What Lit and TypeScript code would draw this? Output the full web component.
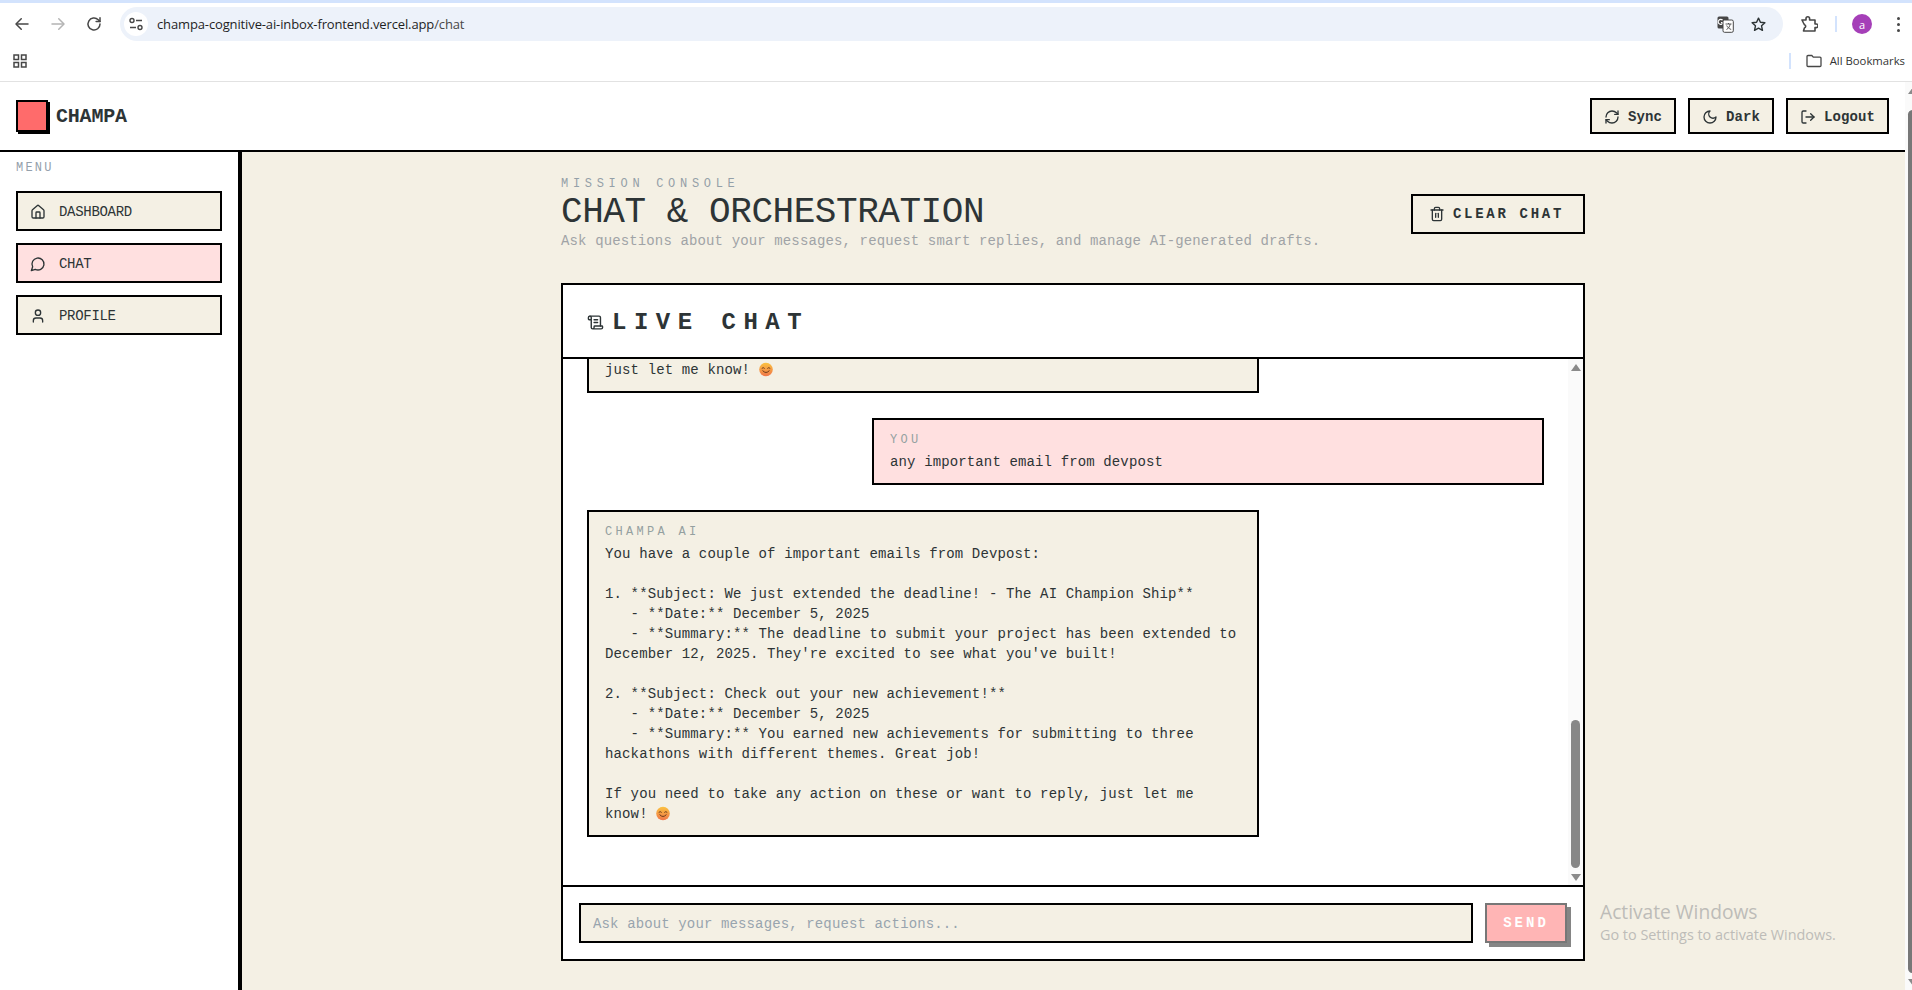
import { LitElement, html, css, svg } from "lit";
import { customElement } from "lit/decorators.js";

const ic = (body: unknown, size = 16, sw = 2) => html`<svg class="ic" width=${size} height=${size} viewBox="0 0 24 24" fill="none" stroke="currentColor" stroke-width=${sw} stroke-linecap="round" stroke-linejoin="round">${body}</svg>`;

const house = svg`<path d="M15 21v-8a1 1 0 0 0-1-1h-4a1 1 0 0 0-1 1v8"/><path d="M3 10a2 2 0 0 1 .709-1.528l7-5.999a2 2 0 0 1 2.582 0l7 5.999A2 2 0 0 1 21 10v9a2 2 0 0 1-2 2H5a2 2 0 0 1-2-2z"/>`;
const msg = svg`<path d="M7.9 20A9 9 0 1 0 4 16.1L2 22Z"/>`;
const user = svg`<path d="M19 21v-2a4 4 0 0 0-4-4H9a4 4 0 0 0-4 4v2"/><circle cx="12" cy="7" r="4"/>`;
const refresh = svg`<path d="M3 12a9 9 0 0 1 9-9 9.75 9.75 0 0 1 6.74 2.74L21 8"/><path d="M21 3v5h-5"/><path d="M21 12a9 9 0 0 1-9 9 9.75 9.75 0 0 1-6.74-2.74L3 16"/><path d="M8 16H3v5"/>`;
const moon = svg`<path d="M12 3a6 6 0 0 0 9 9 9 9 0 1 1-9-9Z"/>`;
const logout = svg`<path d="M9 21H5a2 2 0 0 1-2-2V5a2 2 0 0 1 2-2h4"/><path d="m16 17 5-5-5-5"/><path d="M21 12H9"/>`;
const trash = svg`<path d="M3 6h18"/><path d="M19 6v14c0 1-1 2-2 2H7c-1 0-2-1-2-2V6"/><path d="M8 6V4c0-1 1-2 2-2h4c1 0 2 1 2 2v2"/><line x1="10" y1="11" x2="10" y2="17"/><line x1="14" y1="11" x2="14" y2="17"/>`;
const scroll = svg`<path d="M15 12h-5"/><path d="M15 8h-5"/><path d="M19 17V5a2 2 0 0 0-2-2H4"/><path d="M8 21h12a2 2 0 0 0 2-2v-1a1 1 0 0 0-1-1H11a1 1 0 0 0-1 1v1a2 2 0 1 1-4 0V5a2 2 0 1 0-4 0v2a1 1 0 0 0 1 1h3"/>`;

const smile = html`<svg class="emoji" width="14" height="15" viewBox="0 0 14 15">
  <defs><linearGradient id="eg" x1="0" y1="0" x2="0" y2="1"><stop offset="0" stop-color="#fbc23f"/><stop offset="1" stop-color="#f0764a"/></linearGradient></defs>
  <circle cx="7" cy="7.5" r="6.8" fill="url(#eg)"/>
  <path d="M3 6.2q1.2-1.4 2.4 0M8.6 6.2q1.2-1.4 2.4 0" stroke="#6b3a1c" stroke-width="1" fill="none" stroke-linecap="round"/>
  <path d="M3.8 8.8q3.2 3.6 6.4 0" stroke="#6b3a1c" stroke-width="1" fill="none" stroke-linecap="round"/>
</svg>`;

@customElement("app-root")
export class AppRoot extends LitElement {
  static styles = css`
    :host { display: block; width: 1912px; height: 990px; overflow: hidden; position: relative; background: #fff; font-family: "Liberation Mono", monospace; color: #2d3436; }
    * { box-sizing: border-box; }
    .ic { display: block; flex: none; }

    /* browser chrome */
    .chrome { height: 82px; background: #fff; border-bottom: 1px solid #e2e2e2; border-top: 3px solid #d3e3fd; font-family: "Open Sans", "Liberation Sans", sans-serif; }
    .toolbar { height: 38px; display: flex; align-items: center; padding: 4px 8px 0 4px; }
    .tb { width: 36px; height: 34px; display: flex; align-items: center; justify-content: center; color: #474747; flex: none; }
    .tb.dim { color: #b4b4b4; }
    .omni { flex: 1; height: 34px; border-radius: 17px; background: #edf2fa; margin-left: 8px; display: flex; align-items: center; padding: 0 16px 0 4px; gap: 16px; }
    .tune { width: 24px; height: 24px; border-radius: 50%; background: #fff; display: flex; align-items: center; justify-content: center; color: #474747; flex: none; }
    .url { margin-left: -7px; flex: 1; font-size: 13px; color: #1f1f1f; letter-spacing: -0.01em; white-space: nowrap; }
    .url span { color: #474747; }
    .ext { margin-left: 8px; }
    .sep { width: 2px; height: 16px; background: #d3e3fd; flex: none; }
    .sep.s1 { margin-left: 8px; }
    .avatar { width: 20px; height: 20px; border-radius: 50%; background: #a53fb8; color: #fff; font-size: 11px; display: flex; align-items: center; justify-content: center; margin-left: 15px; flex: none; }
    .dots { width: 12px; margin-left: 20px; display: flex; flex-direction: column; align-items: center; gap: 3px; flex: none; }
    .dots i { width: 3px; height: 3px; border-radius: 50%; background: #474747; display: block; }
    .bookmarks { height: 40px; display: flex; align-items: center; padding: 0 7px 1px 13px; color: #474747; }
    .spacer { flex: 1; }
    .bm-text { font-size: 11.3px; color: #333; margin-left: 8px; white-space: nowrap; }
    .bm-folder { margin-left: 15px; }

    /* page */
    .page { display: flex; height: 908px; }
    .app { flex: 1; min-width: 0; display: flex; flex-direction: column; }
    .page-sb { width: 7px; overflow: hidden; flex: none; }
    .sb { width: 15px; height: 100%; background: #fafafa; display: flex; flex-direction: column; align-items: center; padding: 5px 0 4px; flex: none; }
    .up { width: 0; height: 0; border-left: 5px solid transparent; border-right: 5px solid transparent; border-bottom: 7px solid #8a8a8a; flex: none; }
    .down { width: 0; height: 0; border-left: 5px solid transparent; border-right: 5px solid transparent; border-top: 7px solid #8a8a8a; flex: none; }
    .thumb { width: 9px; border-radius: 5px; background: #878787; margin-bottom: 6px; flex: none; }
    .thumb.inner { height: 148px; }
    .thumb.outer { height: 863px; background: #777; }

    .hdr { height: 70px; flex: none; border-bottom: 2px solid #000; background: #fff; display: flex; align-items: center; padding: 0 16px; }
    .logo { width: 32px; height: 32px; background: #ff6b6b; border: 2px solid #000; box-shadow: 2px 2px 0 #000; flex: none; }
    .brand { margin-left: 8px; font-size: 20px; font-weight: 700; letter-spacing: -0.2px; }
    .hbtn { height: 36px; border: 2px solid #000; background: #f4f0e4; display: flex; align-items: center; gap: 8px; padding: 2px 12px 0; font: 700 14px "Liberation Mono", monospace; letter-spacing: 0.1px; color: #2d3436; margin-left: 12px; }
    .body { flex: 1; display: flex; min-height: 0; }
    .side { width: 242px; flex: none; border-right: 4px solid #000; background: #fff; padding: 9px 16px 0; }
    .menu { font-size: 12px; line-height: 15px; letter-spacing: 2.2px; color: #94a0ab; margin-bottom: 15px; }
    .nav { display: flex; flex-direction: column; gap: 12px; }
    .nav a { height: 40px; border: 2px solid #000; background: #f4f0e4; display: flex; align-items: center; gap: 13px; padding: 2px 12px 0; font-size: 14px; letter-spacing: -0.3px; }
    .nav a.on { background: #ffe0e0; }

    .main { flex: 1; min-width: 0; background: #f4f0e4; overflow: hidden; padding: 24px 1px 0 0; }
    .wrap { width: 1024px; margin: 0 auto; }
    .head { display: flex; justify-content: space-between; align-items: center; margin-bottom: 32px; }
    .eyebrow { font-size: 12px; line-height: 16px; letter-spacing: 4.7px; color: #94a0a8; }
    h1 { margin: 0; font-size: 36px; line-height: 42px; font-weight: 400; letter-spacing: -0.45px; }
    .sub { font-size: 14px; line-height: 20px; letter-spacing: 0.13px; color: #a0a3a6; margin-top: -3px; }
    .clear { height: 40px; border: 2px solid #000; background: #f4f0e4; display: flex; align-items: center; gap: 8px; padding: 0 19px 0 16px; font: 700 14px "Liberation Mono", monospace; letter-spacing: 2.7px; color: #2d3436; }

    .card { height: 678px; border: 2px solid #000; background: #fff; display: flex; flex-direction: column; }
    .card-h { height: 74px; flex: none; border-bottom: 2px solid #000; display: flex; align-items: center; padding: 2px 0 0 24px; gap: 8px; }
    .card-h h2 { margin: 0; font-size: 24px; font-weight: 700; letter-spacing: 7.5px; }
    .mid { flex: 1; min-height: 0; display: flex; }
    .msgs { flex: 1; min-width: 0; overflow: hidden; display: flex; flex-direction: column; justify-content: flex-end; gap: 25px; padding: 0 24px 48px; }
    .bubble { width: 672px; flex: none; border: 2px solid #000; padding: 12px 16px 11px; font-size: 14px; line-height: 20px; letter-spacing: 0.13px; }
    .bubble.ai { background: #f4f0e4; }
    .bubble.me { background: #ffe0e0; align-self: flex-end; }
    .who { font-size: 12px; line-height: 16px; letter-spacing: 3.3px; color: #94a0a0; margin-bottom: 4px; }
    .txt { white-space: pre-wrap; }
    .emoji { vertical-align: -3px; }
    .composer { flex: none; height: 74px; border-top: 2px solid #000; padding: 16px; display: flex; gap: 12px; }
    .composer input { flex: 1; min-width: 0; height: 40px; border: 2px solid #000; background: #f4f0e4; padding: 2px 10px 0 12px; font: 14px "Liberation Mono", monospace; letter-spacing: 0.13px; outline: none; border-radius: 0; }
    .composer input::placeholder { color: #98a4ae; opacity: 1; }
    .send { width: 82px; height: 40px; border: 2px solid #777; background: #ffb5b5; color: #fff; font: 700 14px "Liberation Mono", monospace; letter-spacing: 3px; box-shadow: 4px 4px 0 #858585; padding: 0; }
    .watermark { position: absolute; left: 1600px; top: 899px; color: #bdbcb8; font-family: "Open Sans", "Liberation Sans", sans-serif; pointer-events: none; }
    .watermark b { display: block; font-weight: 400; font-size: 19.2px; line-height: 26px; }
    .watermark span { display: block; font-size: 14.4px; line-height: 19px; }
  `;

  render() {
    const aiText = `You have a couple of important emails from Devpost:

1. **Subject: We just extended the deadline! - The AI Champion Ship**
   - **Date:** December 5, 2025
   - **Summary:** The deadline to submit your project has been extended to December 12, 2025. They're excited to see what you've built!

2. **Subject: Check out your new achievement!**
   - **Date:** December 5, 2025
   - **Summary:** You earned new achievements for submitting to three hackathons with different themes. Great job!

If you need to take any action on these or want to reply, just let me know! `;
    return html`
      <div class="chrome">
        <div class="toolbar">
          <div class="tb">${ic(svg`<path d="M20 12H5"/><path d="m11 5-7 7 7 7"/>`, 18, 2)}</div>
          <div class="tb dim">${ic(svg`<path d="M4 12h15"/><path d="m13 5 7 7-7 7"/>`, 18, 2)}</div>
          <div class="tb">${ic(svg`<path d="M20 12a8 8 0 1 1-2.4-5.7L20 8.6"/><path d="M20 3.5v5.2h-5.2"/>`, 18, 2)}</div>
          <div class="omni">
            <div class="tune">
              <svg width="16" height="16" viewBox="0 0 16 16" fill="none" stroke="currentColor" stroke-width="1.4"><circle cx="4" cy="4.5" r="2"/><path d="M8 4.5h6M2 11.5h6"/><circle cx="12" cy="11.5" r="2"/></svg>
            </div>
            <div class="url">champa-cognitive-ai-inbox-frontend.vercel.app<span>/chat</span></div>
            <svg class="ic" width="17" height="17" viewBox="0 0 17 17">
              <rect x="0.5" y="0.5" width="11" height="12" rx="1.5" fill="#474747"/>
              <path d="M5.6 4.2a2.5 2.5 0 1 0 .5 2.4H4" fill="none" stroke="#fff" stroke-width="1.1"/>
              <rect x="6" y="4" width="10.3" height="12.3" rx="1.5" fill="#fff" stroke="#474747"/>
              <path d="M8.5 8h6M11.5 7v1M9.5 13.5c2-1 3.3-3 3.6-5.5M9.7 9.5c.8 1.800 2.500 3.300 4.500 4" stroke="#474747" fill="none" stroke-width=".9"/>
            </svg>
            ${ic(svg`<path d="m12 3 2.700 5.900 6.300.7-4.700 4.300 1.300 6.400L12 17.100l-5.600 3.200 1.300-6.400L3 9.600l6.300-.7z"/>`, 17, 2)}
          </div>
          <div class="tb ext">
            <svg width="18" height="18" viewBox="0 0 18 18" fill="none" stroke="currentColor" stroke-width="1.6" stroke-linejoin="round"><path d="M2 5h4V3.500a1.800 1.800 0 0 1 3.600 0V5h5.400v4h1.200a1.800 1.800 0 0 1 0 3.600H15V16H3.500l.9-3a1.700 1.700 0 0 0 0-3.300L3.500 8z"/></svg>
          </div>
          <div class="sep s1"></div>
          <div class="avatar">a</div>
          <div class="dots"><i></i><i></i><i></i></div>
        </div>
        <div class="bookmarks">
          <svg width="14" height="14" viewBox="0 0 14 14" fill="none" stroke="currentColor" stroke-width="1.500"><rect x="1" y="1" width="4.500" height="4.500"/><rect x="8.500" y="1" width="4.500" height="4.500"/><rect x="1" y="8.500" width="4.500" height="4.500"/><rect x="8.500" y="8.500" width="4.500" height="4.500"/></svg>
          <div class="spacer"></div>
          <div class="sep"></div>
          <svg class="bm-folder" width="16" height="14" viewBox="0 0 16 14" fill="none" stroke="currentColor" stroke-width="1.300"><path d="M1 2.500a1 1 0 0 1 1-1h3.800l1.500 1.700H14a1 1 0 0 1 1 1v7.300a1 1 0 0 1-1 1H2a1 1 0 0 1-1-1z"/></svg>
          <div class="bm-text">All Bookmarks</div>
        </div>
      </div>

      <div class="page">
        <div class="app">
          <header class="hdr">
            <div class="logo"></div>
            <div class="brand">CHAMPA</div>
            <div class="spacer"></div>
            <button class="hbtn">${ic(refresh)}Sync</button>
            <button class="hbtn">${ic(moon)}Dark</button>
            <button class="hbtn">${ic(logout)}Logout</button>
          </header>
          <div class="body">
            <aside class="side">
              <div class="menu">MENU</div>
              <nav class="nav">
                <a>${ic(house)}DASHBOARD</a>
                <a class="on">${ic(msg)}CHAT</a>
                <a>${ic(user)}PROFILE</a>
              </nav>
            </aside>
            <main class="main">
              <div class="wrap">
                <div class="head">
                  <div>
                    <div class="eyebrow">MISSION CONSOLE</div>
                    <h1>CHAT &amp; ORCHESTRATION</h1>
                    <div class="sub">Ask questions about your messages, request smart replies, and manage AI-generated drafts.</div>
                  </div>
                  <button class="clear">${ic(trash)}CLEAR CHAT</button>
                </div>
                <section class="card">
                  <div class="card-h">${ic(scroll, 17)}<h2>LIVE CHAT</h2></div>
                  <div class="mid">
                    <div class="msgs">
                      <div class="bubble ai"><div class="txt">just let me know! ${smile}</div></div>
                      <div class="bubble me"><div class="who">YOU</div><div class="txt">any important email from devpost</div></div>
                      <div class="bubble ai"><div class="who">CHAMPA AI</div><div class="txt">${aiText}${smile}</div></div>
                    </div>
                    <div class="sb"><div class="up"></div><div class="spacer"></div><div class="thumb inner"></div><div class="down"></div></div>
                  </div>
                  <div class="composer">
                    <input placeholder="Ask about your messages, request actions..." />
                    <button class="send">SEND</button>
                  </div>
                </section>
              </div>
            </main>
          </div>
        </div>
        <div class="page-sb"><div class="sb"><div class="up"></div><div class="spacer"></div><div class="thumb outer"></div><div class="down"></div></div></div>
      </div>
      <div class="watermark"><b>Activate Windows</b><span>Go to Settings to activate Windows.</span></div>
    `;
  }
}
